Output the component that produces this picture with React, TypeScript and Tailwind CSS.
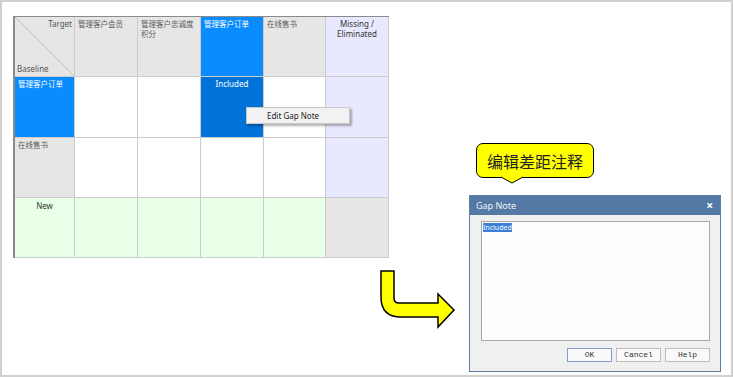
import React from "react";

const sans = "font-['Noto_Sans','Noto_Sans_CJK_SC',sans-serif]";

function HeaderCell({ children, selected }: { children: React.ReactNode; selected?: boolean }) {
  return (
    <div
      className={`border-r border-b border-[#cccccc] pl-[3px] pt-[2px] text-[7.5px] leading-[10px] whitespace-nowrap ${
        selected ? "bg-[#0a8cff] text-white" : "bg-[#e6e6e6] text-[#5a5a5a]"
      }`}
    >
      {children}
    </div>
  );
}

function Cell({ className = "bg-white", children }: { className?: string; children?: React.ReactNode }) {
  return <div className={`border-r border-b border-[#cccccc] ${className}`}>{children}</div>;
}

function GapMatrix() {
  return (
    <div
      className={`ml-[11px] mt-[14px] grid w-[376px] grid-cols-[60px_63px_63px_63px_62px_63px] grid-rows-[60px_61px_60px_60px] border-l-2 border-t border-[#8a8a8a] ${sans}`}
    >
      {/* corner */}
      <div className="relative border-r border-b border-[#cccccc] bg-[#e6e6e6] text-[8px] text-[#555]">
        <svg className="absolute inset-0" width="59" height="59" viewBox="0 0 59 59">
          <line x1="0" y1="0" x2="59" y2="59" stroke="#b8b8b8" strokeWidth="0.8" />
        </svg>
        <span className="absolute right-[2px] top-[1px]">Target</span>
        <span className="absolute left-[2px] bottom-[1px]">Baseline</span>
      </div>
      <HeaderCell>管理客户会员</HeaderCell>
      <HeaderCell>
        管理客户忠诚度
        <br />
        积分
      </HeaderCell>
      <HeaderCell selected>管理客户订单</HeaderCell>
      <HeaderCell>在线售书</HeaderCell>
      <div className="border-r border-b border-[#cccccc] bg-[#e8e8ff] pt-[2px] text-center text-[8px] leading-[10px] text-[#333]">
        Missing /
        <br />
        Eliminated
      </div>

      {/* row 1 */}
      <HeaderCell selected>管理客户订单</HeaderCell>
      <Cell />
      <Cell />
      <Cell className="bg-[#0073d9] pt-[1px] text-center text-[8px] text-white">Included</Cell>
      <Cell />
      <Cell className="bg-[#e8e8ff]" />

      {/* row 2 */}
      <HeaderCell>在线售书</HeaderCell>
      <Cell />
      <Cell />
      <Cell />
      <Cell />
      <Cell className="bg-[#e8e8ff]" />

      {/* row 3 */}
      <Cell className="bg-[#e8ffe8] pt-[2px] text-center text-[8px] text-[#333]">New</Cell>
      <Cell className="bg-[#e8ffe8]" />
      <Cell className="bg-[#e8ffe8]" />
      <Cell className="bg-[#e8ffe8]" />
      <Cell className="bg-[#e8ffe8]" />
      <Cell className="bg-[#e6e6e6]" />
    </div>
  );
}

function ContextMenu() {
  return (
    <div
      className={`absolute left-[244px] top-[105px] h-[17px] w-[104px] border border-[#c8c8c8] bg-[#f2f2f2] pl-[20px] text-[8px] leading-[15px] text-[#222] shadow-[2px_2px_2px_rgba(0,0,0,0.3)] ${sans}`}
    >
      Edit Gap Note
    </div>
  );
}

function BentArrow() {
  return (
    <svg className="absolute left-[374px] top-[264px]" width="82" height="66" viewBox="0 0 82 66">
      <path
        d="M5 5 H18 V32 Q18 37 23 37 H62 V28 L78 44 L62 61 V51 H25 Q5 51 5 31 Z"
        fill="#ffff00"
        stroke="#000"
        strokeWidth="1.5"
        strokeLinejoin="miter"
      />
    </svg>
  );
}

function Callout() {
  return (
    <div className="absolute left-[474px] top-[141px]">
      <div className="flex h-[35px] w-[118px] items-center justify-center rounded-[7px] border border-black bg-[#ffff00] font-['Noto_Sans_CJK_SC',sans-serif] text-[16px] text-[#222]">
        编辑差距注释
      </div>
      <svg className="absolute left-[25px] top-[33px]" width="22" height="8" viewBox="0 0 22 8">
        <path d="M0 1 L11 7 L22 1" fill="#ffff00" stroke="#000" strokeWidth="1" />
        <rect x="1" y="0" width="20" height="1.2" fill="#ffff00" />
      </svg>
    </div>
  );
}

function GapNoteDialog() {
  return (
    <div className={`absolute left-[467px] top-[193px] flex h-[177px] w-[252px] flex-col border border-[#5a7ea6] bg-[#f0f0f0] ${sans}`}>
      <div className="flex h-[19px] items-center justify-between bg-[#5479a4] pl-[6px] pr-[7px] text-[9px] text-[#eef2f7]">
        <span>Gap Note</span>
        <span className="text-[12px] font-bold leading-none text-white">×</span>
      </div>
      <div className="ml-[11px] mr-[10px] mt-[6px] h-[120px] border border-[#a8a8a8] bg-[#fdfdfd] p-[1px] text-[7px] leading-[9px]">
        <span className="bg-[#3a7fd5] text-white">Included</span>
      </div>
      <div className="mr-[10px] mt-[7px] flex justify-end gap-[4px] font-['Liberation_Mono',monospace] text-[8px] text-[#333]">
        <button className="h-[14px] w-[45px] border border-[#7f9dc8] bg-[#fafafa] leading-[12px]">OK</button>
        <button className="h-[14px] w-[45px] border border-[#bdbdbd] bg-[#fafafa] leading-[12px]">Cancel</button>
        <button className="h-[14px] w-[45px] border border-[#bdbdbd] bg-[#fafafa] leading-[12px]">Help</button>
      </div>
    </div>
  );
}

export default function App() {
  return (
    <div className="relative h-[377px] w-[733px] overflow-hidden border-2 border-[#d0d0d0] bg-white">
      <GapMatrix />
      <ContextMenu />
      <BentArrow />
      <Callout />
      <GapNoteDialog />
    </div>
  );
}
